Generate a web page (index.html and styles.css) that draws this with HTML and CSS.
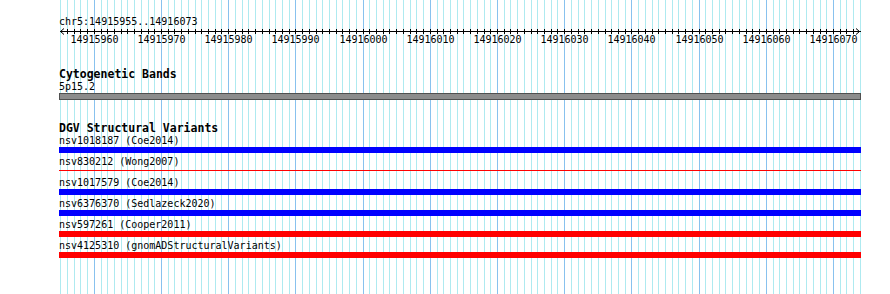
FILE: index.html
```html
<!DOCTYPE html>
<html lang="en">
<head>
    <meta charset="UTF-8">
    <title>chr5:14915955..14916073</title>
    <link rel="stylesheet" href="styles.css">
</head>
<body>
    <div class="view">
        <!-- base grid, one line per bp, darker every 10 bp -->
        <svg class="grid" id="grid" width="890" height="294"></svg>

        <div class="tracks">
            <div class="locus">chr5:14915955..14916073</div>
            <svg class="ruler" id="ruler" width="802" height="18"></svg>

            <div class="track-title first">Cytogenetic Bands</div>
            <div class="label">5p15.2</div>
            <div class="band"></div>

            <div class="track-title">DGV Structural Variants</div>
            <div class="row">
                <div class="label">nsv1018187 (Coe2014)</div>
                <div class="bar gain"></div>
            </div>
            <div class="row">
                <div class="label">nsv830212 (Wong2007)</div>
                <div class="bar loss thin"></div>
            </div>
            <div class="row">
                <div class="label">nsv1017579 (Coe2014)</div>
                <div class="bar gain"></div>
            </div>
            <div class="row">
                <div class="label">nsv6376370 (Sedlazeck2020)</div>
                <div class="bar gain"></div>
            </div>
            <div class="row">
                <div class="label">nsv597261 (Cooper2011)</div>
                <div class="bar loss"></div>
            </div>
            <div class="row">
                <div class="label">nsv4125310 (gnomADStructuralVariants)</div>
                <div class="bar loss"></div>
            </div>
        </div>
    </div>

    <script>
        const NS = "http://www.w3.org/2000/svg";
        const START = 14915955;
        const BP = 120;          // grid lines drawn
        const X0 = 60.7;         // x of first base
        const STEP = 6.72;       // px per bp
        const OFF = 59;          // left edge of the tracks

        function el(name, attrs) {
            const e = document.createElementNS(NS, name);
            for (const k in attrs) e.setAttribute(k, attrs[k]);
            return e;
        }

        const grid = document.getElementById("grid");
        const ruler = document.getElementById("ruler");

        // ruler baseline with arrows at both ends
        ruler.appendChild(el("line", { x1: 1, y1: 3.5, x2: 802, y2: 3.5, class: "axis" }));
        ruler.appendChild(el("polyline", { points: "5,0.5 1.5,3.5 5,6.5", class: "axis arrow" }));
        ruler.appendChild(el("polyline", { points: "797,0.5 800.5,3.5 797,6.5", class: "axis arrow" }));

        for (let i = 0; i < BP; i++) {
            const x = Math.floor(X0 + i * STEP) + 0.5;
            const pos = START + i;
            const major = pos % 10 === 0;

            grid.appendChild(el("line", { x1: x, y1: 0, x2: x, y2: 294, class: major ? "major" : "minor" }));

            const rx = x - OFF;
            if (rx > 6 && rx < 796) {
                ruler.appendChild(el("line", { x1: rx, y1: 1, x2: rx, y2: 6, class: "axis" }));
            }
            if (major) {
                const t = el("text", { x: rx, y: 15, class: "num" });
                t.textContent = pos;
                ruler.appendChild(t);
            }
        }
    </script>
</body>
</html>
```

FILE: styles.css
```css
body {
    margin: 0;
    background-color: #fff;
    font-family: "DejaVu Sans Mono", "Liberation Mono", monospace;
    font-size: 10px;
    color: #000;
}

.view {
    position: relative;
    width: 890px;
    height: 294px;
    overflow: hidden;
}

.grid {
    position: absolute;
    top: 0;
    left: 0;
}

.grid line {
    shape-rendering: crispEdges;
    stroke-width: 1;
}

.grid .minor {
    stroke: #aeeaf0;
}

.grid .major {
    stroke: #88c2ee;
}

.tracks {
    position: relative;
    width: 802px;
    padding-left: 59px;
}

.locus {
    padding-top: 16px;
    line-height: 12px;
}

.ruler {
    display: block;
    overflow: visible;
}

.ruler .axis {
    stroke: #000;
    stroke-width: 1;
    fill: none;
    shape-rendering: crispEdges;
}

.ruler .arrow {
    shape-rendering: auto;
}

.ruler .num {
    font-family: "DejaVu Sans Mono", monospace;
    font-size: 10px;
    text-anchor: middle;
    fill: #000;
}

.track-title {
    margin-top: 21px;
    font-size: 11.5px;
    font-weight: bold;
    line-height: 14px;
}

.label {
    line-height: 12px;
    white-space: nowrap;
}

.band {
    height: 5px;
    background-color: #8c8c8c;
    border: 1px solid #505050;
}

.row {
    padding-bottom: 3px;
}

.bar {
    height: 6px;
}

.bar.gain {
    background-color: #0000ff;
}

.bar.loss {
    background-color: #ff0000;
}

.bar.thin {
    height: 1px;
    margin: 2px 0 3px;
}
```
